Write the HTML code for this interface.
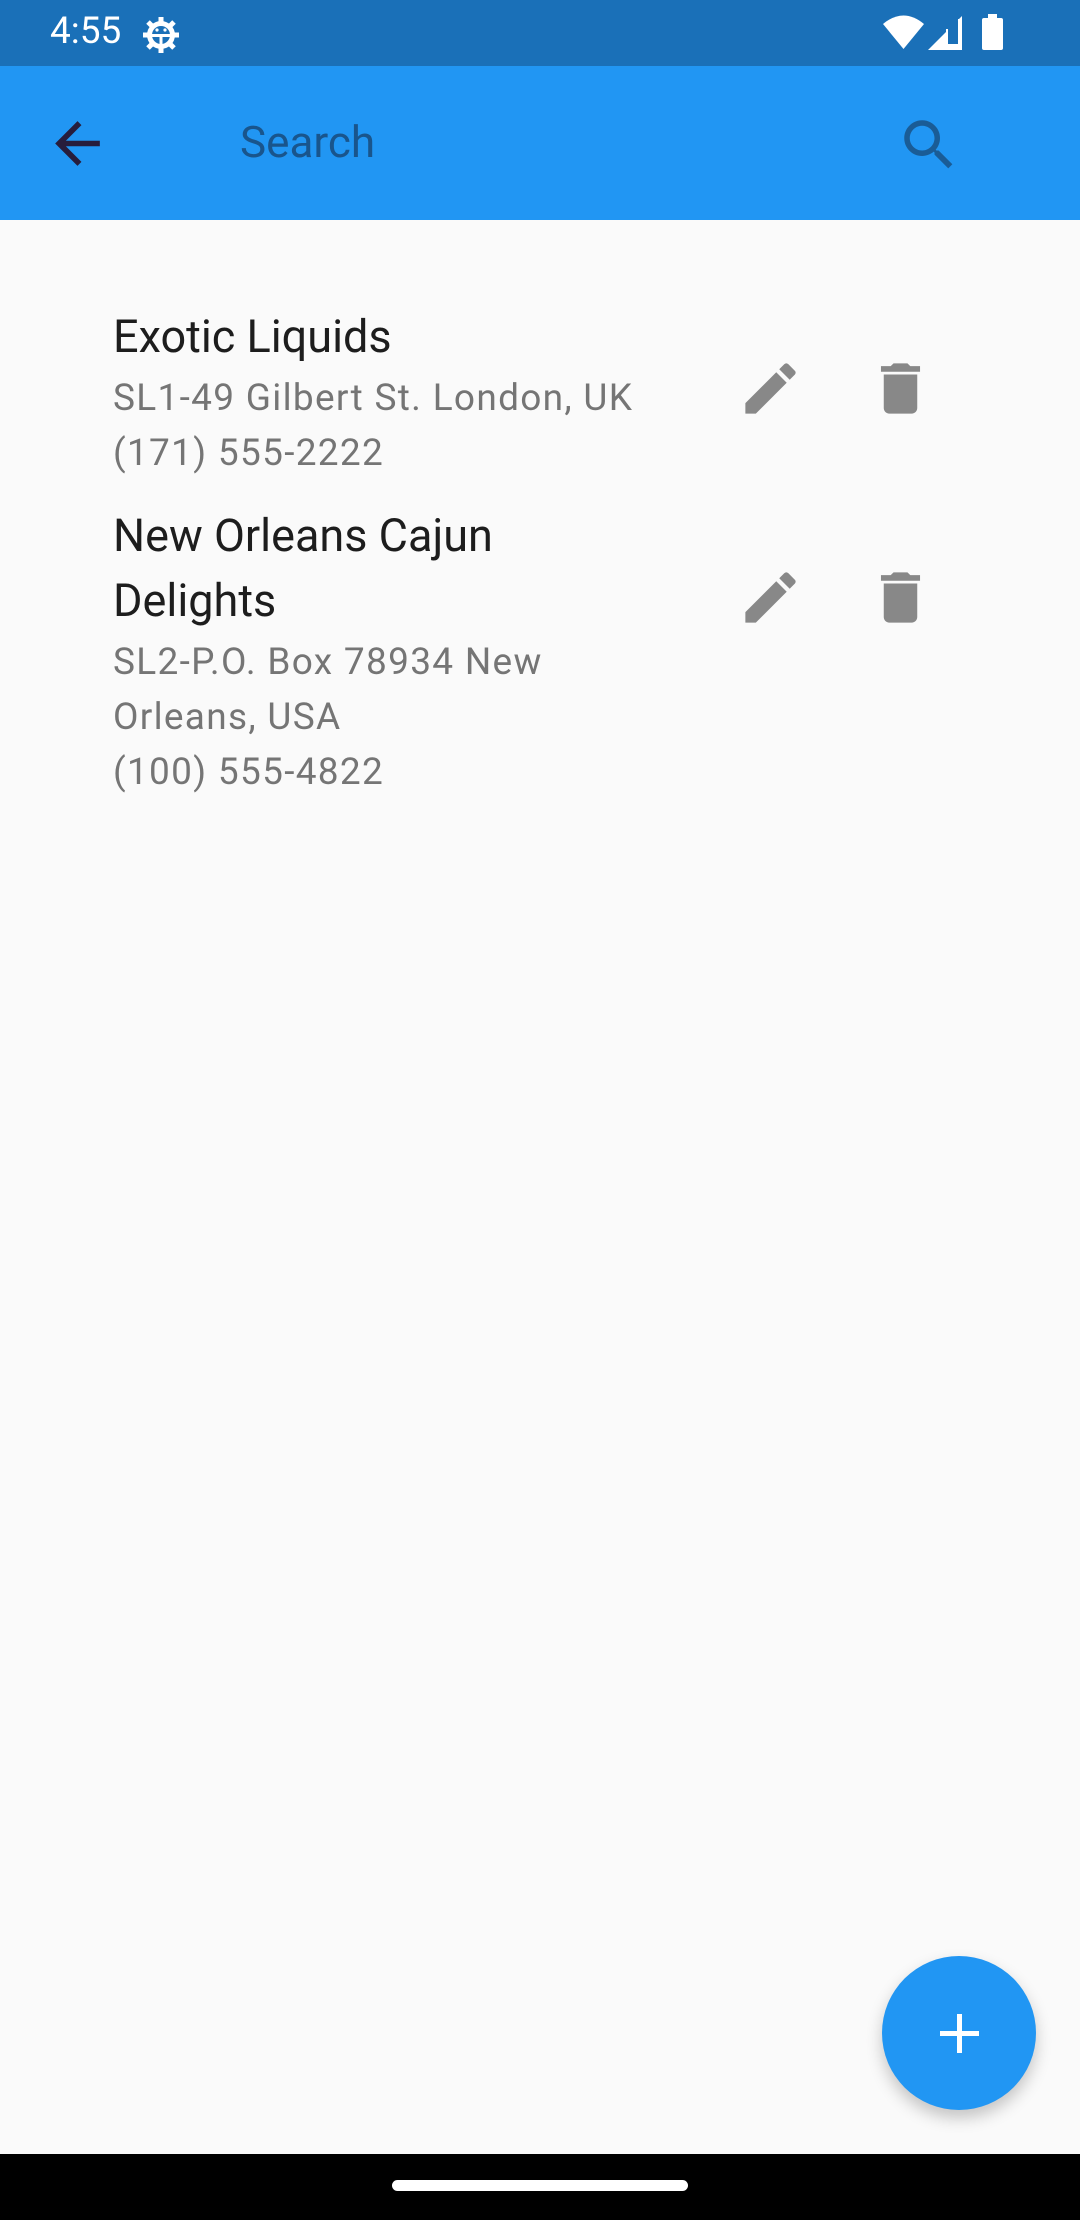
<!DOCTYPE html>
<html><head><meta charset="utf-8"><style>
*{margin:0;padding:0;box-sizing:border-box}
body{width:1080px;height:2220px;background:#fafafa;position:relative;overflow:hidden;font-family:"Roboto","Liberation Sans",sans-serif}
.abs{position:absolute}
.t{position:absolute;white-space:nowrap;line-height:1}
.title{font-size:45px;color:#1d1d1d;left:113px}
.sub{font-size:37px;color:#757575;left:113px;letter-spacing:1.3px}
</style></head><body>
<div class="abs" style="left:0;top:0;width:1080px;height:66px;background:#1a70b8"></div>
<div class="t" style="left:50px;top:13px;font-size:37px;color:#fff">4:55</div>
<svg class="abs" style="left:142px;top:16px" width="38" height="38" viewBox="0 0 38 38"><g fill="#fff"><circle cx="19" cy="19" r="14"/><g stroke="#fff" stroke-width="5"><line x1="19" y1="1" x2="19" y2="37"/><line x1="1" y1="19" x2="37" y2="19"/><line x1="6" y1="6" x2="32" y2="32"/><line x1="32" y1="6" x2="6" y2="32"/></g></g><circle cx="19" cy="19" r="9" fill="#1a70b8"/><rect x="10" y="18" width="18" height="3" fill="#fff"/><rect x="17.5" y="18" width="3" height="10" fill="#fff"/><circle cx="15" cy="14" r="1.6" fill="#fff"/><circle cx="23" cy="14" r="1.6" fill="#fff"/></svg>
<svg class="abs" style="left:883px;top:15px" width="41" height="35" viewBox="0 0 41 35"><path d="M0 9 Q20.5 -8 41 9 L20.5 34 Z" fill="#fff"/></svg>
<svg class="abs" style="left:928px;top:16px" width="34" height="34" viewBox="0 0 34 34"><path d="M34 0V34H0Z" fill="#fff"/><path d="M19 13V29H31V3Z" fill="#1a70b8"/><path d="M31 3V29H19V13" fill="none" stroke="#fff" stroke-width="2"/></svg>
<div class="abs" style="left:982px;top:18px;width:21px;height:32px;background:#fff;border-radius:2px"></div>
<div class="abs" style="left:988px;top:14px;width:9px;height:5px;background:#fff"></div>

<div class="abs" style="left:0;top:66px;width:1080px;height:154px;background:#2196f3"></div>
<svg class="abs" style="left:44px;top:110px" width="67" height="67" viewBox="0 0 24 24"><path d="M20 11H7.83l5.59-5.59L12 4l-8 8 8 8 1.41-1.41L7.83 13H20v-2z" fill="#271d3c"/></svg>
<div class="t" style="left:240px;top:120px;font-size:44px;color:#19558c">Search</div>
<svg class="abs" style="left:896px;top:112px" width="66" height="66" viewBox="0 0 24 24"><path d="M15.5 14h-.79l-.28-.27C15.41 12.59 16 11.11 16 9.5 16 5.91 13.09 3 9.5 3S3 5.91 3 9.5 5.91 16 9.5 16c1.61 0 3.09-.59 4.23-1.57l.27.28v.79l5 4.99L20.49 19l-4.99-5zm-6 0C7.01 14 5 11.99 5 9.5S7.01 5 9.5 5 14 7.01 14 9.5 11.99 14 9.5 14z" fill="#1a5c96"/></svg>

<div class="t title" style="top:314px">Exotic Liquids</div>
<div class="t sub" style="top:380px">SL1-49 Gilbert St. London, UK</div>
<div class="t sub" style="top:435px">(171) 555-2222</div>
<svg class="abs" style="left:737px;top:355px" width="67" height="67" viewBox="0 0 24 24"><path d="M3 17.25V21h3.75L17.81 9.94l-3.75-3.75L3 17.25zM20.71 7.04c.39-.39.39-1.02 0-1.41l-2.34-2.34c-.39-.39-1.02-.39-1.41 0l-1.83 1.83 3.75 3.75 1.83-1.83z" fill="#888"/></svg>
<svg class="abs" style="left:867px;top:355px" width="67" height="67" viewBox="0 0 24 24"><path d="M6 19c0 1.1.9 2 2 2h8c1.1 0 2-.9 2-2V7H6v12zM19 4h-3.5l-1-1h-5l-1 1H5v2h14V4z" fill="#888"/></svg>

<div class="t title" style="top:513px">New Orleans Cajun</div>
<div class="t title" style="top:578px">Delights</div>
<div class="t sub" style="top:644px">SL2-P.O. Box 78934 New</div>
<div class="t sub" style="top:699px">Orleans, USA</div>
<div class="t sub" style="top:754px">(100) 555-4822</div>
<svg class="abs" style="left:737px;top:564px" width="67" height="67" viewBox="0 0 24 24"><path d="M3 17.25V21h3.75L17.81 9.94l-3.75-3.75L3 17.25zM20.71 7.04c.39-.39.39-1.02 0-1.41l-2.34-2.34c-.39-.39-1.02-.39-1.41 0l-1.83 1.83 3.75 3.75 1.83-1.83z" fill="#888"/></svg>
<svg class="abs" style="left:867px;top:564px" width="67" height="67" viewBox="0 0 24 24"><path d="M6 19c0 1.1.9 2 2 2h8c1.1 0 2-.9 2-2V7H6v12zM19 4h-3.5l-1-1h-5l-1 1H5v2h14V4z" fill="#888"/></svg>

<div class="abs" style="left:882px;top:1956px;width:154px;height:154px;border-radius:50%;background:#2196f3;box-shadow:0 8px 16px rgba(0,0,0,.22)"></div>
<div class="abs" style="left:940px;top:2031px;width:39px;height:5px;background:#fff"></div>
<div class="abs" style="left:957px;top:2014px;width:5px;height:39px;background:#fff"></div>

<div class="abs" style="left:0;top:2154px;width:1080px;height:66px;background:#000"></div>
<div class="abs" style="left:392px;top:2180px;width:296px;height:11px;border-radius:6px;background:#fff"></div>
</body></html>
